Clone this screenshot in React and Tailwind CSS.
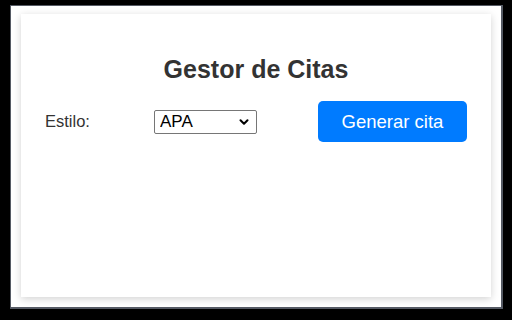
import React, { useState } from 'react';
import { ChevronDown } from 'lucide-react';

const styles = ['APA', 'MLA', 'Chicago', 'Harvard'];

export default function App() {
  const [style, setStyle] = useState('APA');

  return (
    <div className="w-[512px] h-[320px] bg-black pt-[5px] pl-[10px]" style={{ fontFamily: '"Liberation Sans", Arial, sans-serif' }}>
      <div className="w-[493px] h-[304px] bg-white border border-[#555a64] border-r-2 border-b-2 pt-[8px] px-[10px] pb-[10px]">
        <div className="h-full bg-white shadow-[0_2px_8px_rgba(0,0,0,0.18)] px-[24px] pt-[41px]">
          <h2 className="text-center text-[25px] leading-[29px] font-bold text-[#333]">Gestor de Citas</h2>
          <div className="mt-[17px] flex items-center">
            <label className="w-[109px] text-[16.5px] text-[#333]">Estilo:</label>
            <div className="relative w-[103px] h-[24px]">
              <select
                value={style}
                onChange={(e) => setStyle(e.target.value)}
                className="appearance-none w-full h-full border border-[#767676] rounded-[2px] text-[17px] leading-[22px] text-black pl-[5px] bg-white"
              >
                {styles.map((s) => (
                  <option key={s} value={s}>{s}</option>
                ))}
              </select>
              <ChevronDown className="absolute right-[6px] top-[5px] w-[14px] h-[14px] pointer-events-none text-black" strokeWidth={3.5} />
            </div>
            <button className="ml-auto w-[149px] h-[41px] rounded-[5px] bg-[#007bff] text-white text-[18.5px]">
              Generar cita
            </button>
          </div>
        </div>
      </div>
    </div>
  );
}
